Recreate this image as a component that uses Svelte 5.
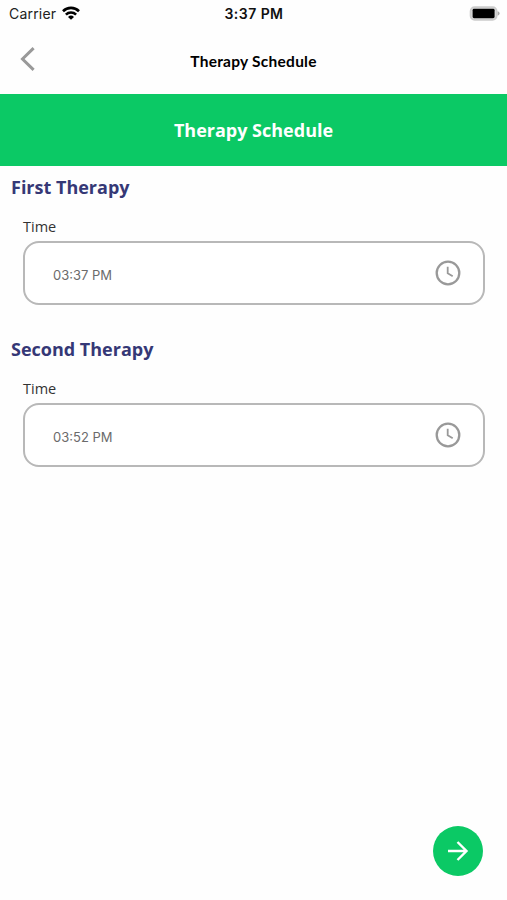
<script>
	let sections = $state([
		{ id: 'first', title: 'First Therapy', time: '03:37 PM' },
		{ id: 'second', title: 'Second Therapy', time: '03:52 PM' }
	]);
</script>

<div class="screen">
	<div class="status">
		<div class="status__carrier">
			<span class="carrier">Carrier</span>
			<svg class="wifi" viewBox="0 0 18 14" aria-hidden="true">
				<g fill="none" stroke="#000" stroke-width="2.6">
					<path d="M1 5.2a11.4 11.4 0 0 1 16 0" />
					<path d="M3.9 8.6a7.3 7.3 0 0 1 10.2 0" />
				</g>
				<path d="M9 13.8 6 10.9a4.3 4.3 0 0 1 6 0z" />
			</svg>
		</div>
		<span class="clock">3:37 PM</span>
		<div class="status__battery">
			<svg class="battery" viewBox="0 0 31 15" aria-hidden="true">
				<rect x="1.6" y="1.2" width="26" height="12.6" rx="4" fill="#ddd" stroke="#ccc" stroke-width="1.8" />
				<rect x="3.6" y="2.8" width="22" height="9.4" rx="1.4" />
				<path d="M28.6 5.3q2 .6 2 2.2t-2 2.2z" fill="#aaa" />
			</svg>
		</div>
	</div>

	<header class="nav">
		<button class="nav__back" aria-label="Back">
			<svg viewBox="0 0 15 24"><path d="M13.6 1.2 2.5 12l11.1 10.8" /></svg>
		</button>
		<h1>Therapy Schedule</h1>
	</header>

	<div class="banner"><span>Therapy Schedule</span></div>

	<main>
		{#each sections as section (section.id)}
			<section>
				<h2>{section.title}</h2>
				<div class="label">Time</div>
				<button class="field">
					<span>{section.time}</span>
					<svg viewBox="0 0 26 26" aria-hidden="true">
						<circle cx="13" cy="13" r="11.3" stroke-width="2.3" />
						<path d="M12.7 6.8v6.5l5 3" stroke-width="1.8" />
					</svg>
				</button>
			</section>
		{/each}
	</main>

	<footer>
		<button class="next" aria-label="Next">
			<svg viewBox="0 0 22 20"><path d="M1 10h19M10.5 1l9 9-9 9" /></svg>
		</button>
	</footer>
</div>

<style>
	:global(body) {
		margin: 0;
		background: #fff;
	}

	.screen {
		box-sizing: border-box;
		display: flex;
		flex-direction: column;
		height: 900px;
		background: #fefefe;
		color: #111;
		font-family: 'Open Sans', sans-serif;
	}

	button {
		padding: 0;
		border: 0;
		background: none;
		font: inherit;
		cursor: pointer;
	}

	svg {
		display: block;
		flex-shrink: 0;
	}

	.status {
		display: grid;
		grid-template-columns: 1fr auto 1fr;
		align-items: center;
		height: 27px;
		padding: 0 7px 0 9px;
		font-family: Inter, sans-serif;
		font-size: 14px;
		line-height: 27px;
	}

	.status__carrier {
		display: flex;
		align-items: center;
		gap: 6px;
	}

	.carrier {
		color: #222;
		letter-spacing: 0.2px;
	}

	.wifi {
		width: 18px;
		height: 14px;
		margin-top: -2px;
	}

	.clock {
		margin-right: 1px;
		font-weight: 600;
		letter-spacing: 0.45px;
	}

	.status__battery {
		display: flex;
		justify-content: flex-end;
	}

	.battery {
		width: 31px;
		height: 15px;
		margin-top: -1px;
	}

	.nav {
		display: grid;
		grid-template-columns: 1fr auto 1fr;
		align-items: center;
		height: 67px;
	}

	.nav__back {
		width: 15px;
		margin: -3px 0 0 20px;
	}

	.nav__back svg {
		width: 15px;
		height: 24px;
		fill: none;
		stroke: #999;
		stroke-width: 3;
	}

	h1 {
		margin: 0;
		color: #000;
		font-family: Lato, sans-serif;
		font-size: 15.5px;
		font-weight: 700;
		line-height: 20px;
		letter-spacing: 0.25px;
	}

	.banner {
		display: flex;
		align-items: center;
		justify-content: center;
		height: 72px;
		background: #0bc965;
		color: #fff;
		font-size: 18px;
		font-weight: 700;
	}

	section {
		height: 161.5px;
		padding: 0 22px 0 23px;
	}

	h2 {
		height: 44px;
		margin: 0 0 0 -12px;
		color: #353876;
		font-size: 18px;
		font-weight: 700;
		line-height: 43px;
	}

	.label {
		height: 31px;
		color: #333;
		font-size: 14.5px;
		line-height: 33px;
	}

	.field {
		box-sizing: border-box;
		display: flex;
		align-items: center;
		justify-content: space-between;
		width: 100%;
		height: 64px;
		padding: 0 22px 0 28px;
		border: 2px solid #b8b8b8;
		border-radius: 16px;
		background: #fff;
		color: #6b6b6b;
		font-family: Inter, sans-serif;
		font-size: 13px;
	}

	.field span {
		margin-top: 4px;
	}

	.field svg {
		width: 26px;
		height: 26px;
		fill: none;
		stroke: #999;
	}

	footer {
		display: flex;
		justify-content: flex-end;
		margin-top: auto;
		padding: 0 24px 24px 0;
	}

	.next {
		display: flex;
		align-items: center;
		justify-content: center;
		width: 50px;
		height: 50px;
		border-radius: 50%;
		background: #0bc965;
	}

	.next svg {
		width: 22px;
		height: 20px;
		fill: none;
		stroke: #fff;
		stroke-width: 2.4;
	}
</style>
